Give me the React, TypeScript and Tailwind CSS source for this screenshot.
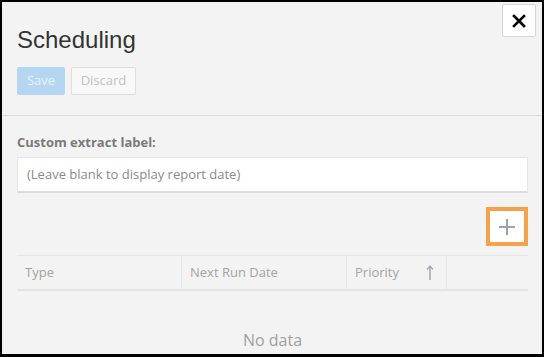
const sans = { fontFamily: '"Open Sans", "Liberation Sans", sans-serif' };

function CloseIcon() {
  return (
    <svg width="14" height="14" viewBox="0 0 14 14" aria-hidden="true">
      <path d="M2 2L12 12M12 2L2 12" stroke="#000" strokeWidth="2.6" strokeLinecap="square" />
    </svg>
  );
}

function PlusIcon() {
  return (
    <svg width="18" height="18" viewBox="0 0 18 18" aria-hidden="true">
      <path d="M9 1V17M1 9H17" stroke="#9aa2aa" strokeWidth="2" />
    </svg>
  );
}

function SortUpIcon() {
  return (
    <svg width="8" height="15" viewBox="0 0 8 15" aria-hidden="true">
      <path d="M4 1.5V15" stroke="#9aa2aa" strokeWidth="1.4" />
      <path d="M1 4.5L4 1.2L7 4.5" fill="none" stroke="#9aa2aa" strokeWidth="1.2" />
    </svg>
  );
}

export default function App() {
  return (
    <div
      className="relative w-[544px] h-[357px] overflow-hidden border-2 border-b-[3px] border-black bg-[#f3f3f3] flex flex-col"
      style={sans}
    >
      {/* Close */}
      <button className="absolute top-[2px] right-[6px] w-[34px] h-[33px] bg-white border border-[#d4d4d4] rounded-[2px] flex items-center justify-center">
        <CloseIcon />
      </button>

      {/* Header */}
      <div className="pl-[15px] pr-[14px] pt-[24px] pb-[20px] border-b border-[#dcdcdc]">
        <h1
          className="text-[24px] leading-[28px] text-[#333]"
          style={{ fontFamily: '"Liberation Sans", Arial, sans-serif' }}
        >
          Scheduling
        </h1>
        <div className="mt-[13px] flex gap-[6px]">
          <button className="h-[28px] w-[48px] rounded-[2px] bg-[#b5d6f1] text-[13px] text-[#e8f2fb]">
            Save
          </button>
          <button className="h-[28px] w-[65px] rounded-[2px] bg-[#f8f8f8] border border-[#dedede] text-[13px] text-[#c2c2c2]">
            Discard
          </button>
        </div>
      </div>

      {/* Body */}
      <div className="pl-[15px] pr-[14px] flex flex-col">
        <label className="mt-[17px] text-[13px] leading-[18px] font-bold text-[#7a7a7a]">
          Custom extract label:
        </label>
        <div className="mt-[6px] h-[36px] bg-white border border-[#e6e6e6] border-b-2 border-b-[#dcdcdc] flex items-center pl-[9px]">
          <span className="text-[13px] text-[#8a8a8a]">(Leave blank to display report date)</span>
        </div>

        <div className="mt-[14px] flex justify-end">
          <button className="w-[42px] h-[39px] bg-white border-4 border-[#f5a24b] flex items-center justify-center">
            <PlusIcon />
          </button>
        </div>

        {/* Table header */}
        <div className="mt-[9px] h-[36px] border-t border-[#e6e6e6] border-b-2 border-b-[#e3e3e3] flex text-[13px] text-[#a3a3a3]">
          <div className="w-[165px] border-r border-[#e6e6e6] flex items-center pl-[8px]">Type</div>
          <div className="w-[165px] border-r border-[#e6e6e6] flex items-center pl-[8px]">Next Run Date</div>
          <div className="w-[100px] border-r border-[#e6e6e6] flex items-center justify-between pl-[8px] pr-[12px]">
            <span>Priority</span>
            <SortUpIcon />
          </div>
          <div className="flex-1" />
        </div>

        <div className="mt-[38px] text-center text-[16px] leading-[22px] text-[#a0a0a0]">No data</div>
      </div>
    </div>
  );
}
